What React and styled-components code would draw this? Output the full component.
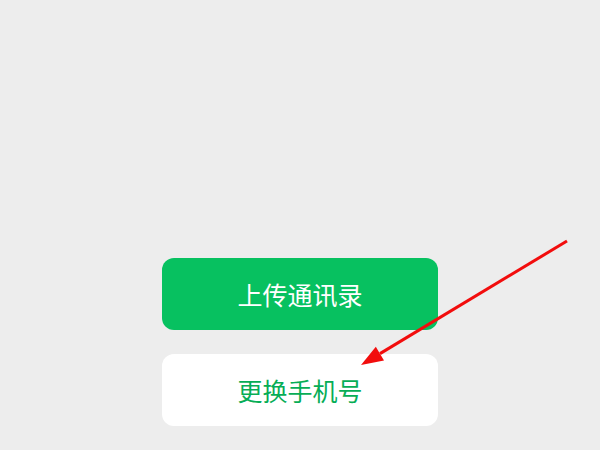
import React from 'react';
import styled, { createGlobalStyle } from 'styled-components';

const GlobalStyle = createGlobalStyle`
  html, body {
    margin: 0;
    padding: 0;
    background: #ededed;
  }
`;

const Page = styled.div`
  position: relative;
  width: 600px;
  height: 450px;
  background: #ededed;
  display: flex;
  flex-direction: column;
  align-items: center;
  justify-content: flex-end;
  gap: 24px;
  padding-bottom: 24px;
  box-sizing: border-box;
  overflow: hidden;
  font-family: "Noto Sans CJK SC", "Noto Sans", sans-serif;
`;

const Button = styled.button`
  width: 276px;
  height: 72px;
  border: none;
  border-radius: 12px;
  background: ${(p) => (p.primary ? '#07c160' : '#ffffff')};
  color: ${(p) => (p.primary ? '#ffffff' : '#07ad56')};
  font-family: inherit;
  font-size: 25px;
  font-weight: 400;
  letter-spacing: 0;
  cursor: pointer;
  display: flex;
  align-items: center;
  justify-content: center;
  padding: 0;
`;

const Annotation = styled.svg`
  position: absolute;
  left: 0;
  top: 0;
  pointer-events: none;
`;

export default function App() {
  return (
    <>
      <GlobalStyle />
      <Page>
        <Button primary>上传通讯录</Button>
        <Button>更换手机号</Button>
        <Annotation width="600" height="450" viewBox="0 0 600 450">
          <line x1="567" y1="241" x2="380" y2="353.6" stroke="#f20d0d" strokeWidth="3" />
          <polygon points="361,365 384,360.5 375.8,346.7" fill="#f20d0d" />
        </Annotation>
      </Page>
    </>
  );
}
